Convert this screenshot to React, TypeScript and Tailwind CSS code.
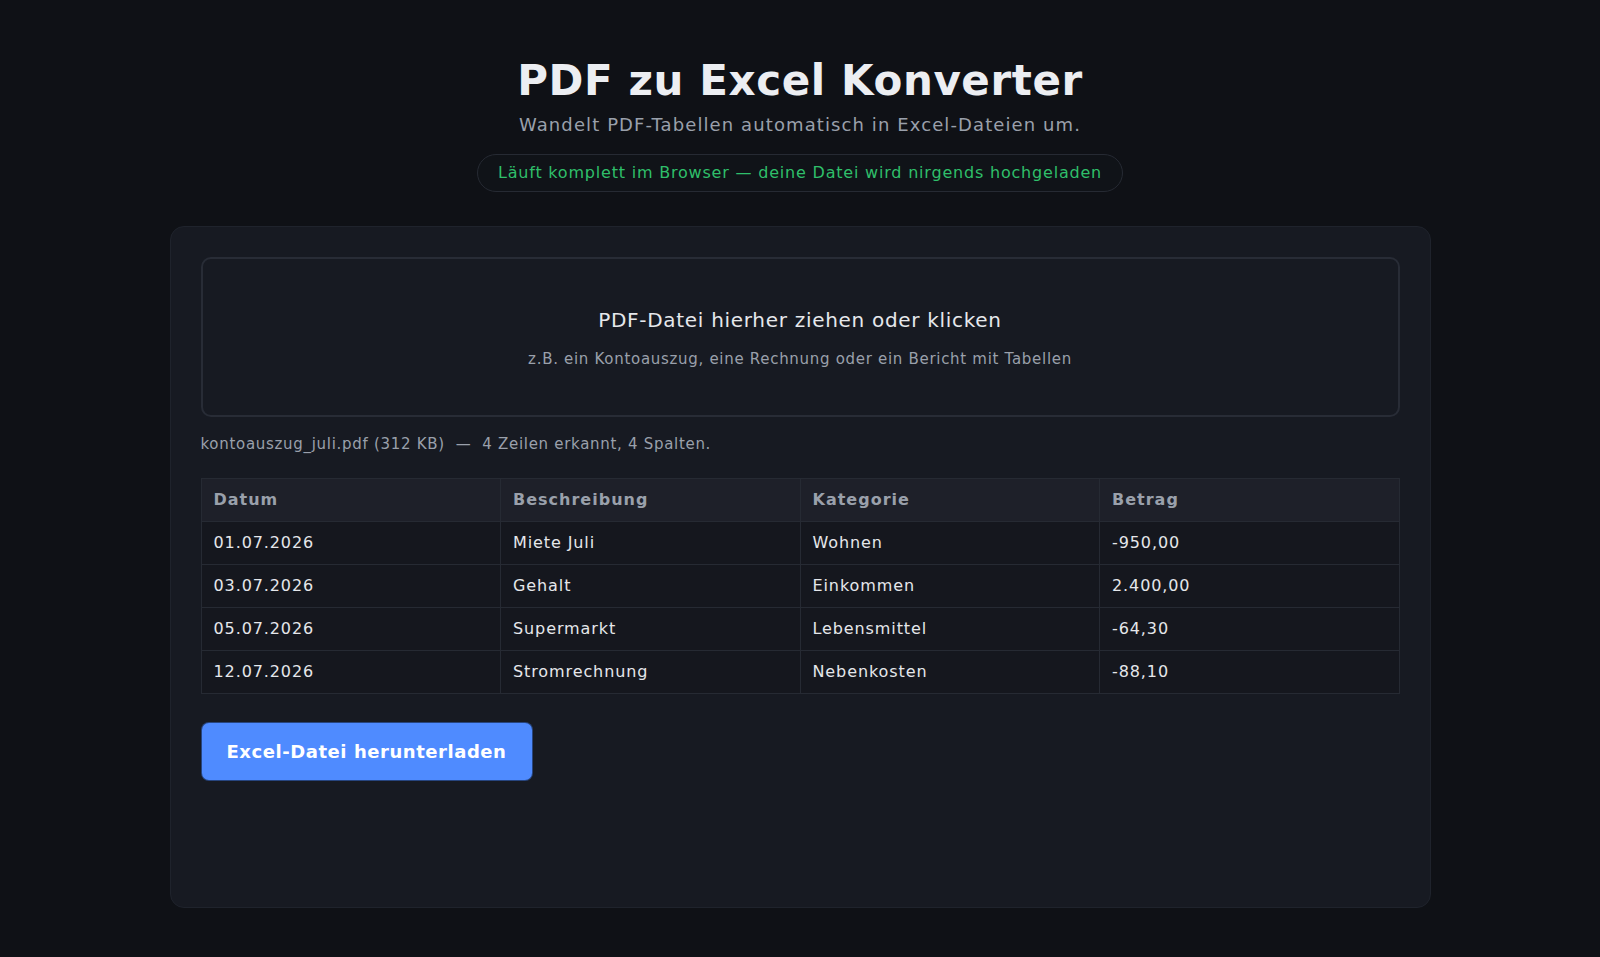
const rows = [
  ["01.07.2026", "Miete Juli", "Wohnen", "-950,00"],
  ["03.07.2026", "Gehalt", "Einkommen", "2.400,00"],
  ["05.07.2026", "Supermarkt", "Lebensmittel", "-64,30"],
  ["12.07.2026", "Stromrechnung", "Nebenkosten", "-88,10"],
];

const headers = ["Datum", "Beschreibung", "Kategorie", "Betrag"];

export default function App() {
  return (
    <div className="min-h-[957px] bg-[#0f1116] font-['DejaVu_Sans',sans-serif] text-[#e5e7eb]">
      <div className="flex flex-col items-center pt-[56px]">
        <h1 className="text-[42px] leading-[50px] font-bold tracking-[0.6px] text-[#eceef2]">PDF zu Excel Konverter</h1>
        <p className="mt-[5px] text-[18px] leading-[27px] tracking-[1.1px] text-[#9aa0ab]">
          Wandelt PDF-Tabellen automatisch in Excel-Dateien um.
        </p>
        <div className="mt-[16px] rounded-full border border-[#262a33] bg-[#101318] px-[20px] py-[8px] text-[16px] leading-[20px] tracking-[0.8px] text-[#2fbf6a]">
          Läuft komplett im Browser — deine Datei wird nirgends hochgeladen
        </div>

        {/* main panel */}
        <div className="mt-[34px] w-[1261px] h-[682px] rounded-[14px] border border-[#1f232c] bg-[#171a22] p-[30px]">
          <div className="flex flex-col items-center rounded-[10px] border-2 border-[#282c36] pt-[47px] pb-[45px]">
            <div className="text-[20px] leading-[28px] tracking-[0.7px] text-[#e6e8ec]">PDF-Datei hierher ziehen oder klicken</div>
            <div className="mt-[14px] text-[15px] leading-[22px] tracking-[0.7px] text-[#9aa0ab]">
              z.B. ein Kontoauszug, eine Rechnung oder ein Bericht mit Tabellen
            </div>
          </div>

          <div className="mt-[16px] text-[15px] leading-[22px] tracking-[0.7px] text-[#9aa0ab]">
            kontoauszug_juli.pdf (312 KB) &nbsp;— &nbsp;4 Zeilen erkannt, 4 Spalten.
          </div>

          <table className="mt-[23px] w-full table-fixed border-collapse text-[16px] tracking-[0.9px]">
            <thead>
              <tr className="bg-[#1e2029]">
                {headers.map((h) => (
                  <th
                    key={h}
                    className="h-[43px] border border-[#262a33] px-[12px] text-left font-bold tracking-[1px] text-[#9aa0ab]"
                  >
                    {h}
                  </th>
                ))}
              </tr>
            </thead>
            <tbody>
              {rows.map((r) => (
                <tr key={r[0]} className="bg-[#15171e]">
                  {r.map((c, i) => (
                    <td key={i} className="h-[43px] border border-[#262a33] px-[12px] text-[#e5e7eb]">
                      {c}
                    </td>
                  ))}
                </tr>
              ))}
            </tbody>
          </table>

          <button className="mt-[28px] h-[59px] w-[332px] rounded-[8px] border border-black/50 bg-[#4f8bff] text-[18px] font-bold tracking-[0.55px] text-white">
            Excel-Datei herunterladen
          </button>
        </div>
      </div>
    </div>
  );
}
